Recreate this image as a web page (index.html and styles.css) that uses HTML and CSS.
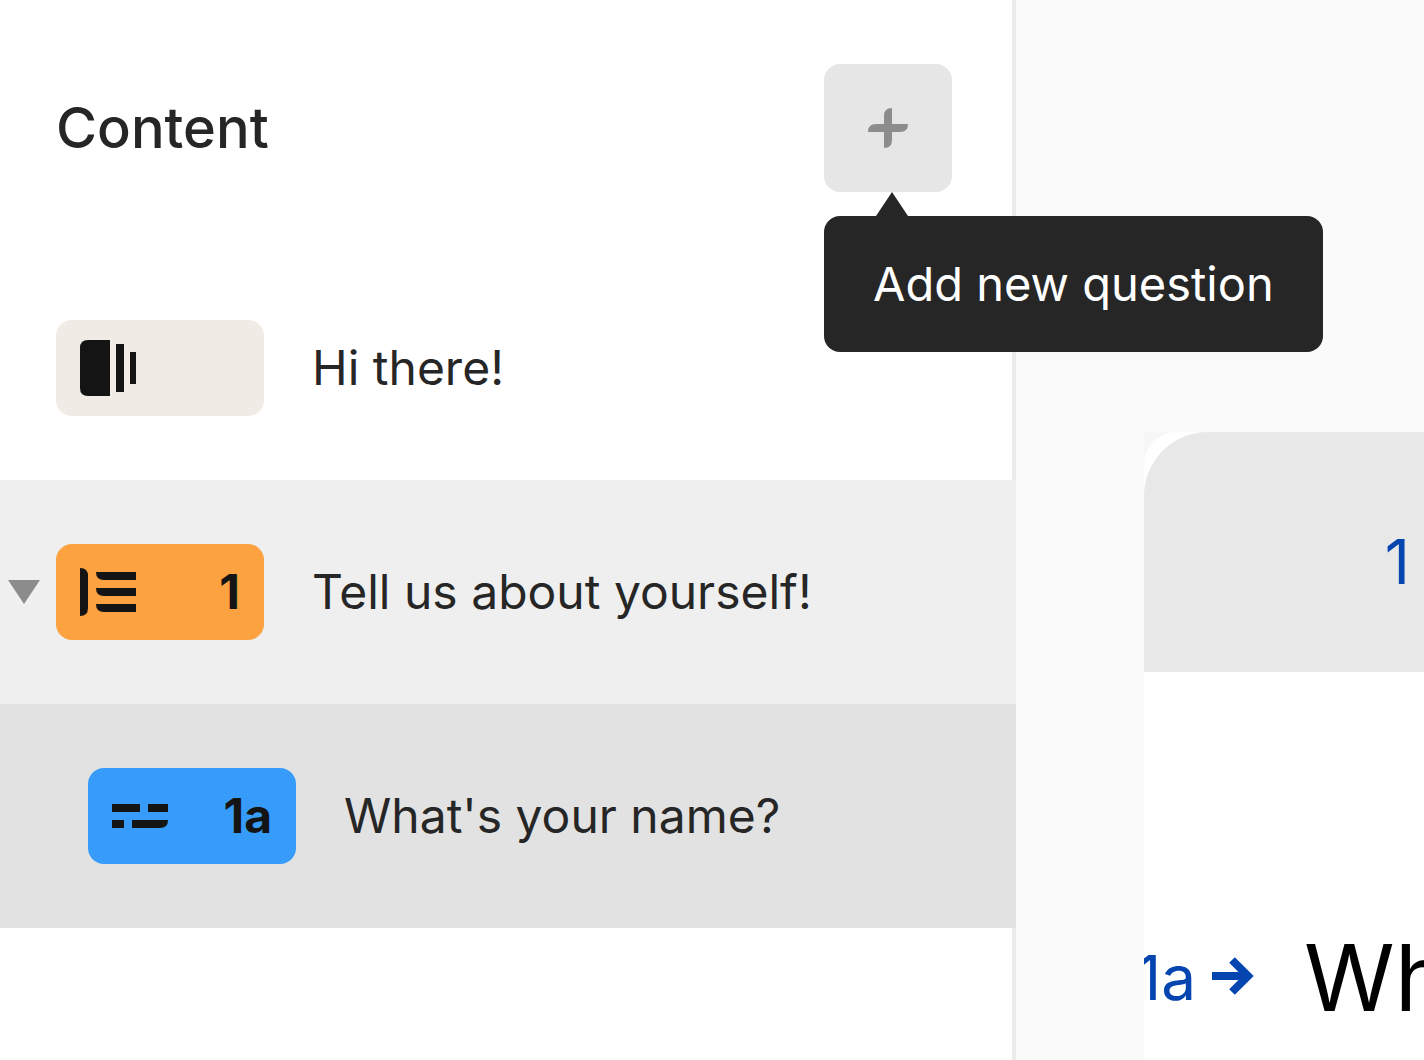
FILE: index.html
```html
<!DOCTYPE html>
<html lang="en">

<head>
    <meta charset="UTF-8">
    <meta name="viewport" content="width=device-width, initial-scale=1.0">
    <title>Form builder</title>
    <link rel="stylesheet" href="styles.css">
</head>

<body>

    <div class="builder">
        <aside class="sidebar">
            <header class="sidebar-header">
                <h1>Content</h1>
                <div class="add-wrapper">
                    <button type="button" class="add-button" aria-label="Add question" aria-describedby="add-tooltip">
                        <svg width="40" height="40" viewBox="0 0 40 40" fill="currentColor">
                            <path d="M24 0v32q0 8-8 8V8q0-8 8-8z" />
                            <path d="M0 24q0-8 8-8h32q0 8-8 8z" />
                        </svg>
                    </button>
                    <div class="tooltip" id="add-tooltip" role="tooltip">Add new question</div>
                </div>
            </header>

            <ul class="question-list">
                <li class="question">
                    <span class="badge badge-welcome">
                        <svg width="56" height="56" viewBox="0 0 56 56">
                            <path d="M30 0v56H8q-8 0-8-8V8q0-8 8-8z" />
                            <path d="M36 4h8v48h-8zM50 12h6v32h-6z" />
                        </svg>
                    </span>
                    <span class="question-title">Hi there!</span>
                </li>
                <li class="question question-group">
                    <button type="button" class="toggle" aria-label="Collapse group">
                        <svg width="32" height="24" viewBox="0 0 32 24">
                            <path d="M0 0h32L16 24z" />
                        </svg>
                    </button>
                    <span class="badge badge-group">
                        <svg width="56" height="48" viewBox="0 0 56 48">
                            <path d="M0 0q8 0 8 8v32q0 8-8 8z" />
                            <path d="M16 4h40v8H24q-8 0-8-8zM16 20h40v8H24q-8 0-8-8zM16 36h40v8H24q-8 0-8-8z" />
                        </svg>
                        <span>1</span>
                    </span>
                    <span class="question-title">Tell us about yourself!</span>
                </li>
                <li class="question question-nested">
                    <span class="badge badge-text">
                        <svg width="56" height="24" viewBox="0 0 56 24">
                            <path d="M0 0h28v8H0zM36 0h20v8H36zM0 16h12v8H0z" />
                            <path d="M20 16h36q0 8-8 8H20z" />
                        </svg>
                        <span>1a</span>
                    </span>
                    <span class="question-title">What's your name?</span>
                </li>
            </ul>
        </aside>

        <main class="preview">
            <div class="card-frame">
                <div class="card">
                    <div class="card-header">1</div>
                    <div class="card-question">
                        <span class="card-number">1a</span>
                        <svg class="card-arrow" width="42" height="38" viewBox="0 0 42 38">
                            <path d="M0 19h36M20 3l16 16-16 16" />
                        </svg>
                        <h2>What's your name?</h2>
                    </div>
                </div>
            </div>
        </main>
    </div>

</body>

</html>
```

FILE: styles.css
```css
* {
    box-sizing: border-box;
}

body {
    margin: 0;
    font-family: Inter, "Liberation Sans", sans-serif;
    background-color: #fafafa;
    color: #262626;
}

button {
    padding: 0;
    border: none;
    cursor: pointer;
}

svg {
    display: block;
    flex: none;
}

.builder {
    display: grid;
    grid-template-columns: minmax(0, 1fr) 408px;
    min-height: 100vh;
}

/* Sidebar */
.sidebar {
    background-color: #fff;
    box-shadow: inset -4px 0 #ececec;
}

.sidebar-header {
    display: flex;
    align-items: center;
    justify-content: space-between;
    padding: 64px 64px 64px 56px;
}

.sidebar-header h1 {
    margin: 0;
    font-size: 56px;
    line-height: 64px;
    font-weight: 500;
}

.add-wrapper {
    position: relative;
}

.add-button {
    display: flex;
    align-items: center;
    justify-content: center;
    width: 128px;
    height: 128px;
    border-radius: 16px;
    background-color: #e6e6e6;
    color: #8c8c8c;
}

.tooltip {
    position: absolute;
    top: 152px;
    left: 0;
    z-index: 1;
    padding: 36px 49px;
    border-radius: 16px;
    background-color: #262626;
    color: #fff;
    font-size: 47px;
    line-height: 64px;
    white-space: nowrap;
}

.tooltip::before {
    content: "";
    position: absolute;
    bottom: 100%;
    left: 52px;
    border: 16px solid transparent;
    border-top: none;
    border-bottom: 24px solid #262626;
}

.question-list {
    margin: 0;
    padding: 0;
    list-style: none;
}

.question {
    display: flex;
    align-items: center;
    padding: 64px 56px;
}

.question-group {
    padding-left: 8px;
    background-color: #efefef;
}

.question-nested {
    padding-left: 88px;
    background-color: #e2e2e2;
}

.question-title {
    margin-left: 48px;
    font-size: 48px;
    line-height: 64px;
}

.toggle {
    margin-right: 16px;
    background: none;
    fill: #8c8c8c;
}

.badge {
    display: flex;
    flex: none;
    align-items: center;
    justify-content: space-between;
    width: 208px;
    height: 96px;
    padding: 0 24px;
    border-radius: 16px;
    color: #141414;
    fill: #141414;
    font-size: 48px;
    line-height: 64px;
    font-weight: 700;
}

.badge-welcome {
    background-color: #f0ebe4;
}

.badge-group {
    background-color: #fca240;
}

.badge-text {
    background-color: #379bfa;
}

/* Preview */
.preview {
    display: flex;
    padding: 432px 0 0 128px;
}

.card-frame {
    display: flex;
    flex: 1;
    min-width: 0;
    background-color: #f7f7f7;
}

.card {
    flex: 1;
    min-width: 0;
    overflow: hidden;
    border-radius: 32px 0 0 0;
    background-color: #fff;
}

.card-header {
    height: 240px;
    padding: 90px 14px 0;
    border-radius: 64px 0 0 0;
    background-color: #e8e8e8;
    color: #0445af;
    font-size: 62px;
    line-height: 80px;
    text-align: right;
}

.card-question {
    display: flex;
    align-items: center;
    margin: 248px 0 0 -8px;
}

.card-number {
    padding-top: 4px;
    color: #0445af;
    font-size: 62px;
    line-height: 108px;
}

.card-arrow {
    margin-left: 16px;
    fill: none;
    stroke: #0445af;
    stroke-width: 8;
}

.card-question h2 {
    margin: 0 0 0 50px;
    padding-top: 4px;
    color: #000;
    font-size: 92px;
    line-height: 108px;
    font-weight: 400;
    white-space: nowrap;
}
```
